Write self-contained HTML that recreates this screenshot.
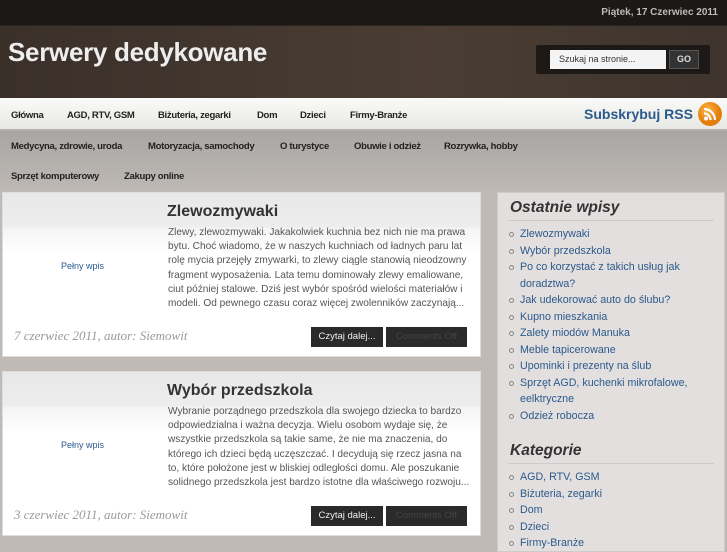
<!DOCTYPE html>
<html><head><meta charset="utf-8"><style>
*{margin:0;padding:0;box-sizing:border-box}
body{width:727px;height:545px;overflow:hidden;background:#bfbab6;font-family:"Liberation Sans",sans-serif;position:relative}
.top{position:absolute;left:0;top:0;width:727px;height:25px;background:#1c1816;color:#bbb;font-size:10px;font-weight:bold;text-align:right;padding:7px 9px 0 0}
.head{position:absolute;left:0;top:25px;width:727px;height:73px;background:linear-gradient(90deg,#3a302a,#4a3d33 60%,#3e342d);border-top:1px solid #2a2420}
.head h1{position:absolute;left:8px;top:11px;color:#eee;font-size:26px;font-weight:bold;letter-spacing:-0.3px}
.sbox{position:absolute;left:536px;top:19px;width:174px;height:29px;background:#1d1916;border-radius:2px}
.sbox .in{position:absolute;left:14px;top:5px;width:116px;height:19px;background:#f4f4f4;font-size:9px;color:#333;padding:4px 0 0 9px}
.sbox .go{position:absolute;left:133px;top:5px;width:30px;height:19px;background:#333;border:1px solid #555;color:#ddd;font-size:9px;font-weight:bold;text-align:center;padding-top:3px}
.nav1{position:absolute;left:0;top:98px;width:727px;height:33px;background:linear-gradient(#fafaf8,#e8e8e4);border-bottom:2px solid #b5b1ad}
.nav1 a,.nav2 a{position:absolute;font-size:9.5px;font-weight:bold;color:#222;text-decoration:none;letter-spacing:-0.3px}
.rss{position:absolute;left:584px;top:8px;font-size:14px;font-weight:bold;color:#2b5a8c}
.rssi{position:absolute;left:698px;top:4px;width:24px;height:24px}
.nav2{position:absolute;left:0;top:131px;width:727px;height:60px;background:linear-gradient(#a9a6a3,#bdb8b4)}
.post{position:absolute;left:2px;width:479px;height:165px;background:#fff;border:1px solid #ddd}
.post .hd{position:absolute;left:0;top:0;width:100%;height:62px;background:linear-gradient(#e8e8e8,#ededed 55%,#f4f4f4 56%,#fff)}
.post h2{position:absolute;left:164px;top:10px;font-size:16px;font-weight:bold;color:#333}
.post .pw{position:absolute;left:58px;top:68px;font-size:9px;color:#2b5a8c}
.post p{position:absolute;left:165px;top:33px;font-size:10.1px;line-height:14.2px;color:#555;white-space:nowrap}
.post .dt{position:absolute;left:11px;top:135px;font-family:"Liberation Serif",serif;font-style:italic;font-size:13px;color:#999}
.post .b1{position:absolute;left:308px;top:134px;width:72px;height:20px;background:#2a2a2a;color:#eee;font-size:9.5px;text-align:center;padding-top:4px}
.post .b2{position:absolute;left:383px;top:134px;width:81px;height:20px;background:#2a2a2a;color:#444;font-size:9.5px;text-align:center;padding-top:4px}
.side{position:absolute;left:497px;top:192px;width:228px;height:360px;background:#e3dfde;border:1px solid #ccc}
.side h3{font-size:15.5px;font-style:italic;font-weight:bold;color:#333;margin:6px 0 0 12px}
.side hr{border:0;border-top:1px solid #ccc;margin:3px 10px 5px 10px}
.side ul{list-style:none;margin-left:10px}
.side li{font-size:10.7px;line-height:16.5px;color:#2b5a8c;padding-left:12px;position:relative}
.side li:before{content:"";position:absolute;left:1px;top:6px;width:3px;height:3px;border:1px solid #888;border-radius:50%}
</style></head><body>
<div class="top">Piątek, 17 Czerwiec 2011</div>
<div class="head"><h1>Serwery dedykowane</h1>
<div class="sbox"><div class="in">Szukaj na stronie...</div><div class="go">GO</div></div></div>
<div class="nav1">
<a style="left:11px;top:12px">Główna</a><a style="left:67px;top:12px">AGD, RTV, GSM</a><a style="left:158px;top:12px">Biżuteria, zegarki</a><a style="left:257px;top:12px">Dom</a><a style="left:300px;top:12px">Dzieci</a><a style="left:350px;top:12px">Firmy-Branże</a>
<div class="rss">Subskrybuj RSS</div>
<svg class="rssi" viewBox="0 0 24 24"><defs><radialGradient id="g" cx="40%" cy="35%"><stop offset="0" stop-color="#fbb74a"/><stop offset="1" stop-color="#e57d0c"/></radialGradient></defs><circle cx="12" cy="12" r="12" fill="url(#g)"/><circle cx="8" cy="16.5" r="2" fill="#fff"/><path d="M6 11.5a6.5 6.5 0 0 1 6.5 6.5M6 7a11 11 0 0 1 11 11" stroke="#fff" stroke-width="2.2" fill="none"/></svg></div>
<div class="nav2">
<a style="left:11px;top:10px">Medycyna, zdrowie, uroda</a><a style="left:148px;top:10px">Motoryzacja, samochody</a><a style="left:280px;top:10px">O turystyce</a><a style="left:354px;top:10px">Obuwie i odzież</a><a style="left:444px;top:10px">Rozrywka, hobby</a>
<a style="left:11px;top:40px">Sprzęt komputerowy</a><a style="left:124px;top:40px">Zakupy online</a></div>
<div class="post" style="top:192px"><div class="hd"></div><h2>Zlewozmywaki</h2><div class="pw">Pełny wpis</div>
<p>Zlewy, zlewozmywaki. Jakakolwiek kuchnia bez nich nie ma prawa<br>bytu. Choć wiadomo, że w naszych kuchniach od ładnych paru lat<br>rolę mycia przejęły zmywarki, to zlewy ciągle stanowią nieodzowny<br>fragment wyposażenia. Lata temu dominowały zlewy emaliowane,<br>ciut później stalowe. Dziś jest wybór spośród wielości materiałów i<br>modeli. Od pewnego czasu coraz więcej zwolenników zaczynają...</p>
<div class="dt">7 czerwiec 2011, autor: Siemowit</div><div class="b1">Czytaj dalej...</div><div class="b2">Comments Off</div></div>
<div class="post" style="top:371px"><div class="hd"></div><h2>Wybór przedszkola</h2><div class="pw">Pełny wpis</div>
<p>Wybranie porządnego przedszkola dla swojego dziecka to bardzo<br>odpowiedzialna i ważna decyzja. Wielu osobom wydaje się, że<br>wszystkie przedszkola są takie same, że nie ma znaczenia, do<br>którego ich dzieci będą uczęszczać. I decydują się rzecz jasna na<br>to, które położone jest w bliskiej odległości domu. Ale poszukanie<br>solidnego przedszkola jest bardzo istotne dla właściwego rozwoju...</p>
<div class="dt">3 czerwiec 2011, autor: Siemowit</div><div class="b1">Czytaj dalej...</div><div class="b2">Comments Off</div></div>
<div class="side"><h3>Ostatnie wpisy</h3><hr><ul>
<li>Zlewozmywaki</li><li>Wybór przedszkola</li><li>Po co korzystać z takich usług jak doradztwa?</li><li>Jak udekorować auto do ślubu?</li><li>Kupno mieszkania</li><li>Zalety miodów Manuka</li><li>Meble tapicerowane</li><li>Upominki i prezenty na ślub</li><li>Sprzęt AGD, kuchenki mikrofalowe, eelktryczne</li><li>Odzież robocza</li></ul>
<h3 style="margin-top:18px">Kategorie</h3><hr><ul>
<li>AGD, RTV, GSM</li><li>Biżuteria, zegarki</li><li>Dom</li><li>Dzieci</li><li>Firmy-Branże</li></ul></div>
</body></html>
